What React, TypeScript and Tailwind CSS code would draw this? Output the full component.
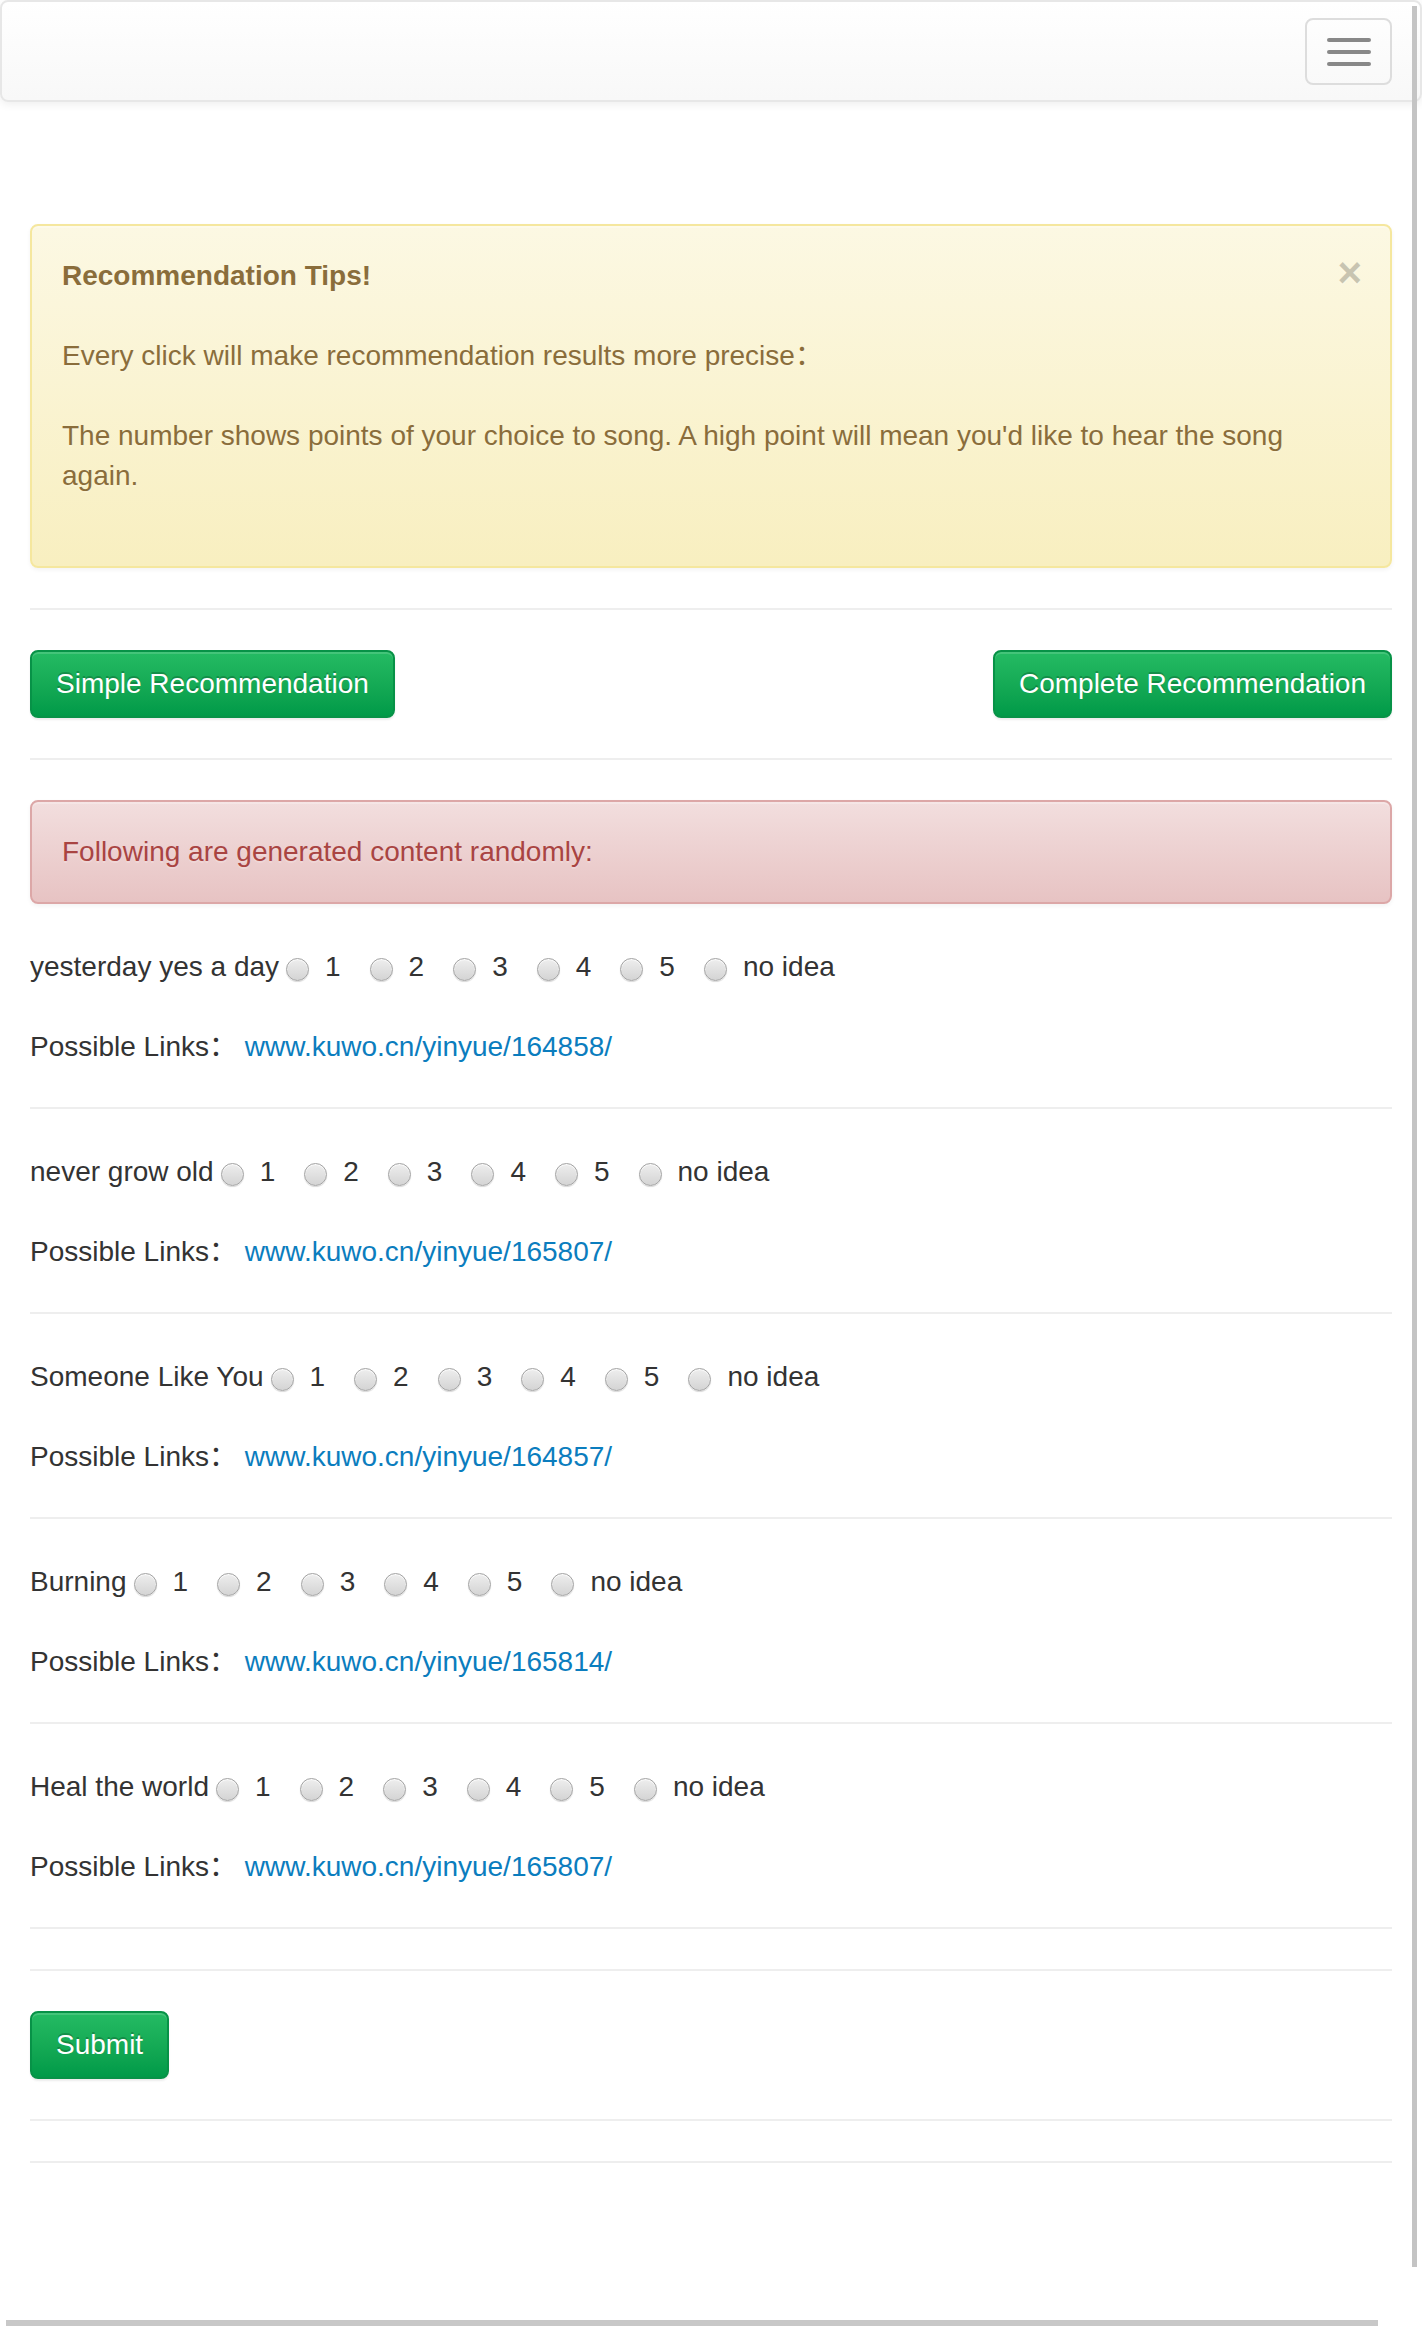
import React, { Fragment } from "react";

const songs = [
  { name: "yesterday yes a day", link: "www.kuwo.cn/yinyue/164858/" },
  { name: "never grow old", link: "www.kuwo.cn/yinyue/165807/" },
  { name: "Someone Like You", link: "www.kuwo.cn/yinyue/164857/" },
  { name: "Burning", link: "www.kuwo.cn/yinyue/165814/" },
  { name: "Heal the world", link: "www.kuwo.cn/yinyue/165807/" },
];

const options = ["1", "2", "3", "4", "5", "no idea"];

function RadioDot({ first }: { first: boolean }) {
  return (
    <span
      className={
        first
          ? "ml-[7px] mt-[4px] block h-[23px] w-[23px] shrink-0 rounded-full border border-[#a3a3a3] bg-linear-to-b from-[#eeeeee] to-[#d4d4d4] shadow-[inset_0_1px_1px_rgba(255,255,255,0.9),0_1px_1px_rgba(0,0,0,0.15)]"
          : "ml-[29px] mt-[4px] block h-[23px] w-[23px] shrink-0 rounded-full border border-[#a3a3a3] bg-linear-to-b from-[#eeeeee] to-[#d4d4d4] shadow-[inset_0_1px_1px_rgba(255,255,255,0.9),0_1px_1px_rgba(0,0,0,0.15)]"
      }
    />
  );
}

function Hr() {
  return <div className="h-[2px] w-full bg-[#eeeeee]" />;
}

function Song({ name, link }: { name: string; link: string }) {
  return (
    <div className="flex flex-col">
      <div className="mt-[3px] flex h-[40px] items-center whitespace-nowrap">
        <span>{name}</span>
        {options.map((o, i) => (
          <Fragment key={o}>
            <RadioDot first={i === 0} />
            <span className="ml-[16px]">{o}</span>
          </Fragment>
        ))}
      </div>
      <div className="mt-[40px] h-[40px] whitespace-nowrap">
        Possible Links：{" "}
        <a href="#" className="text-[#0b7dbe]">
          {link}
        </a>
      </div>
      <div className="mt-[40px] mb-[40px]">
        <Hr />
      </div>
    </div>
  );
}

function GreenButton({ children }: { children: React.ReactNode }) {
  return (
    <button
      type="button"
      className="h-[68px] rounded-[8px] border-2 border-[#079247] bg-linear-to-b from-[#24bb63] to-[#009a48] px-[24px] text-[28px] leading-[40px] text-white shadow-[inset_0_2px_0_rgba(255,255,255,0.15),0_2px_2px_rgba(0,0,0,0.075)] text-shadow-[0_-2px_0_rgba(0,0,0,0.2)]"
    >
      {children}
    </button>
  );
}

export default function App() {
  return (
    <div className="relative h-[2330px] overflow-hidden bg-white font-['Liberation_Sans','Noto_Sans_CJK_SC',Arial,sans-serif] text-[28px] leading-[40px] text-[#333333]">
      {/* Navbar */}
      <div className="flex h-[102px] w-full items-start justify-end rounded-[8px] border-2 border-[#e7e7e7] bg-linear-to-b from-white to-[#f8f8f8] pr-[28px] shadow-[inset_0_2px_0_rgba(255,255,255,0.15),0_2px_10px_rgba(0,0,0,0.075)]">
        <button
          type="button"
          className="mt-[16px] flex h-[67px] w-[87px] flex-col items-center justify-center gap-[8px] rounded-[8px] border-2 border-[#dddddd]"
        >
          <span className="block h-[4px] w-[44px] rounded-[2px] bg-[#888888]" />
          <span className="block h-[4px] w-[44px] rounded-[2px] bg-[#888888]" />
          <span className="block h-[4px] w-[44px] rounded-[2px] bg-[#888888]" />
        </button>
      </div>

      <div className="mt-[122px] px-[30px]">
        {/* Warning alert */}
        <div className="relative rounded-[8px] border-2 border-[#f5e79e] bg-linear-to-b from-[#fcf8e3] to-[#f8efc0] py-[30px] pl-[30px] pr-[70px] text-[#8a6d3b] shadow-[inset_0_2px_0_rgba(255,255,255,0.25),0_2px_4px_rgba(0,0,0,0.05)] text-shadow-[0_2px_0_rgba(255,255,255,0.2)]">
          <span className="absolute right-[28px] top-[26px] h-[42px] text-[42px] font-bold leading-none text-black opacity-20 text-shadow-[0_2px_0_#fff]">
            ×
          </span>
          <div className="font-bold">Recommendation Tips!</div>
          <div className="mt-[40px]">
            Every click will make recommendation results more precise：
          </div>
          <div className="mt-[40px] mb-[40px]">
            The number shows points of your choice to song. A high point will
            mean you'd like to hear the song again.
          </div>
        </div>

        <div className="mt-[40px]">
          <Hr />
        </div>

        <div className="mt-[40px] flex items-start justify-between">
          <GreenButton>Simple Recommendation</GreenButton>
          <GreenButton>Complete Recommendation</GreenButton>
        </div>

        <div className="mt-[40px]">
          <Hr />
        </div>

        {/* Danger alert */}
        <div className="mt-[40px] rounded-[8px] border-2 border-[#dca7a7] bg-linear-to-b from-[#f2dede] to-[#e7c3c3] p-[30px] text-[#a94442] shadow-[inset_0_2px_0_rgba(255,255,255,0.25),0_2px_4px_rgba(0,0,0,0.05)] text-shadow-[0_2px_0_rgba(255,255,255,0.2)]">
          Following are generated content randomly:
        </div>

        <div className="mt-[40px] flex flex-col">
          {songs.map((s, i) => (
            <Song key={i} name={s.name} link={s.link} />
          ))}
        </div>

        <Hr />

        <div className="mt-[40px]">
          <GreenButton>Submit</GreenButton>
        </div>

        <div className="mt-[40px]">
          <Hr />
        </div>
        <div className="mt-[40px]">
          <Hr />
        </div>
      </div>

      {/* overlay scrollbars */}
      <div className="absolute right-[5px] top-[6px] h-[2261px] w-[5px] bg-[#c4c4c4]" />
      <div className="absolute bottom-[4px] left-[6px] h-[6px] w-[1372px] bg-[#c8c8c8]" />
    </div>
  );
}
